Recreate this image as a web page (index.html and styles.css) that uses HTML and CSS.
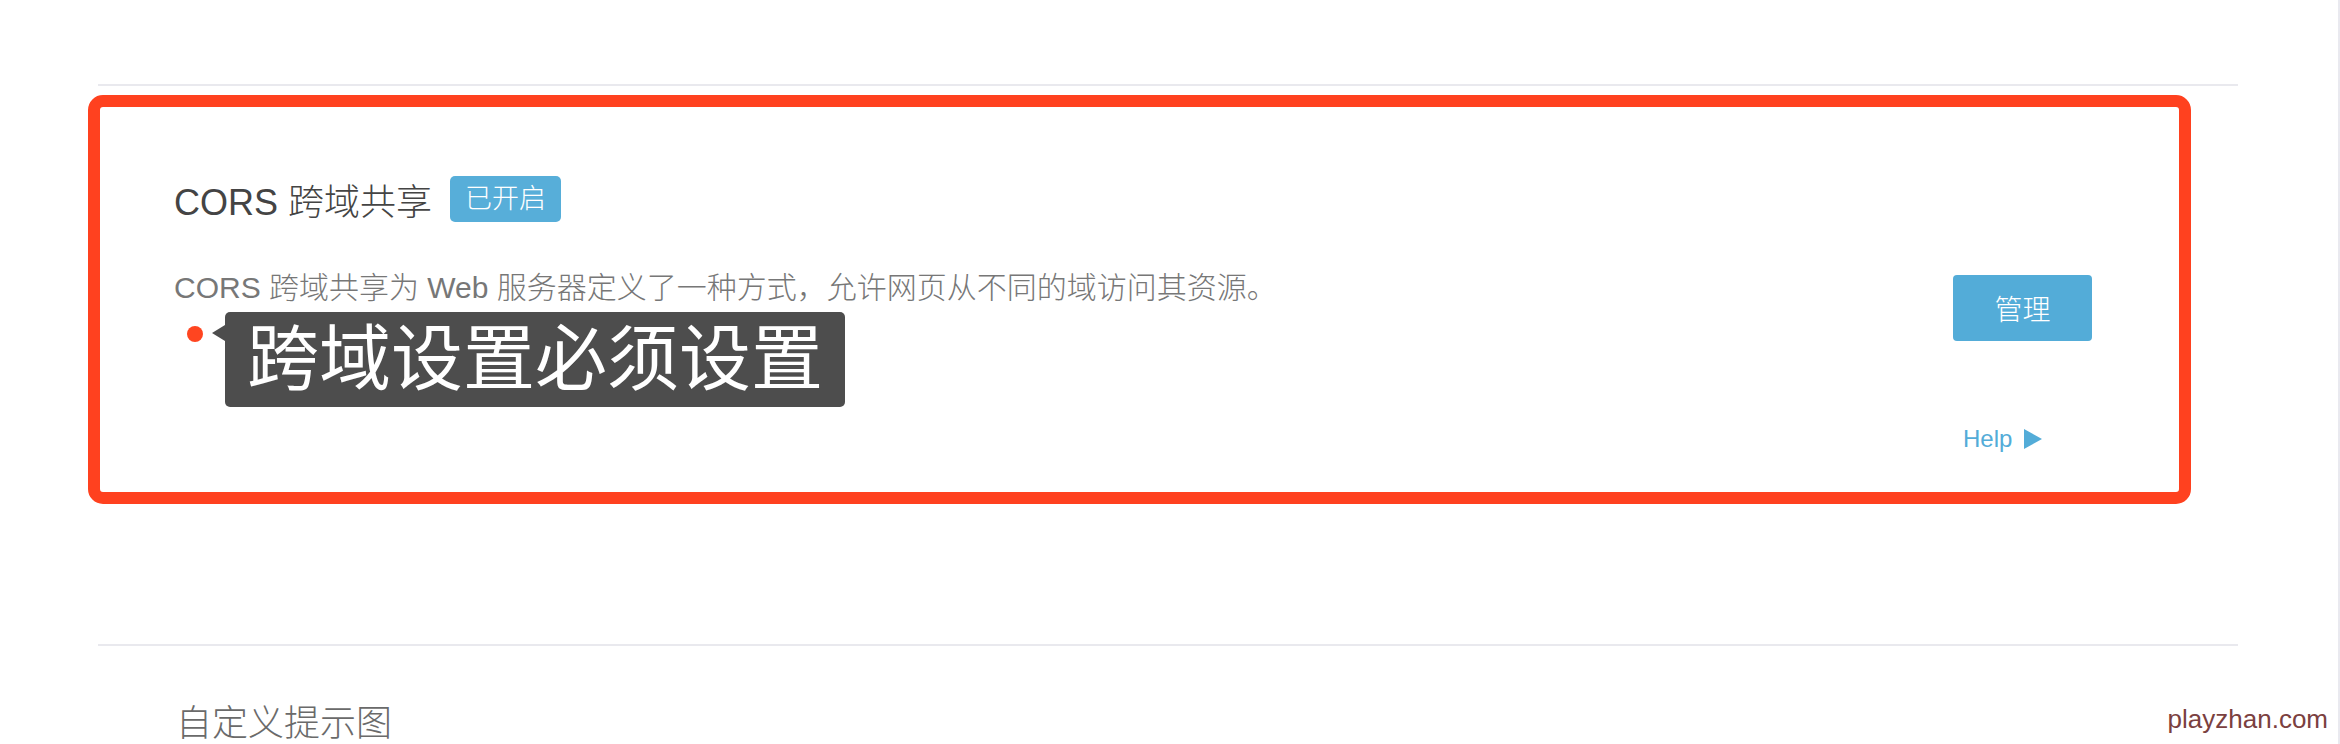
FILE: index.html
```html
<!DOCTYPE html>
<html lang="zh-CN">
<head>
    <meta charset="UTF-8">
    <meta name="viewport" content="width=device-width, initial-scale=1.0">
    <title>跨域设置</title>
    <link rel="stylesheet" href="styles.css">
</head>
<body>
    <div class="page">
        <div class="main">
            <div class="divider"></div>

            <!-- CORS 设置 -->
            <div class="setting-box">
                <div class="setting-info">
                    <div class="setting-title">
                        <span>CORS 跨域共享</span>
                        <span class="badge">已开启</span>
                    </div>
                    <p class="setting-desc">CORS 跨域共享为 Web 服务器定义了一种方式，允许网页从不同的域访问其资源。</p>
                    <div class="tip-row">
                        <span class="tip-dot"></span>
                        <div class="tip">跨域设置必须设置</div>
                    </div>
                </div>
                <div class="setting-actions">
                    <button type="button" class="btn-manage">管理</button>
                    <a class="help-link" href="#">Help
                        <svg width="18" height="20" viewBox="0 0 18 20"><polygon points="0,0 18,10 0,20" fill="#53acd8"/></svg>
                    </a>
                </div>
            </div>

            <div class="divider divider-lower"></div>
            <h3 class="section-title">自定义提示图</h3>
        </div>
        <div class="watermark">playzhan.com</div>
    </div>
</body>
</html>
```

FILE: styles.css
```css
html, body {
    margin: 0;
    padding: 0;
    background-color: #fff;
}

body {
    font-family: "Liberation Sans", "Noto Sans CJK SC", sans-serif;
}

.page {
    position: relative;
    height: 744px;
    overflow: hidden;
    border-right: 2px solid #e9e9ef;
    box-sizing: border-box;
}

.main {
    margin-left: 98px;
    width: 2140px;
}

.divider {
    height: 2px;
    margin-top: 84px;
    background-color: #e9e9ee;
}

.setting-box {
    display: flex;
    box-sizing: border-box;
    width: 2103px;
    height: 409px;
    margin: 9px 0 0 -10px;
    padding: 69px 87px 0 74px;
    border: 12px solid #ff411f;
    border-radius: 15px;
}

.setting-info {
    flex: 1;
}

.setting-title {
    display: flex;
    align-items: center;
    height: 46px;
    font-size: 36px;
    font-weight: 300;
    color: #444;
}

.badge {
    display: inline-block;
    height: 46px;
    line-height: 46px;
    margin-left: 18px;
    padding: 0 15px;
    border-radius: 5px;
    background-color: #57aed9;
    color: #fff;
    font-size: 27px;
}

.setting-desc {
    margin: 46px 0 0;
    font-size: 30px;
    font-weight: 300;
    line-height: 40px;
    color: #777;
}

.tip-row {
    display: flex;
    align-items: flex-start;
    margin-top: 4px;
}

.tip-dot {
    width: 16px;
    height: 16px;
    margin: 14px 0 0 13px;
    border-radius: 50%;
    background-color: #ff4520;
}

.tip {
    position: relative;
    margin-left: 22px;
    padding: 0 22px;
    height: 95px;
    line-height: 95px;
    border-radius: 5px;
    background-color: #4d4d4d;
    color: #fff;
    font-size: 72px;
}

    .tip::before {
        content: "";
        position: absolute;
        left: -13px;
        top: 13px;
        border-top: 8px solid transparent;
        border-bottom: 8px solid transparent;
        border-right: 13px solid #4d4d4d;
    }

.setting-actions {
    display: flex;
    flex-direction: column;
    align-items: flex-start;
    width: 139px;
    margin-top: 99px;
}

.btn-manage {
    width: 139px;
    height: 66px;
    border: none;
    border-radius: 4px;
    background-color: #53acd8;
    color: #fff;
    font-family: inherit;
    font-size: 28px;
    font-weight: 300;
    cursor: pointer;
}

.help-link {
    display: flex;
    align-items: center;
    gap: 12px;
    margin: 83px 0 0 10px;
    font-size: 24px;
    line-height: 30px;
    color: #53acd8;
    text-decoration: none;
    white-space: nowrap;
}

.divider-lower {
    margin-top: 140px;
}

.section-title {
    margin: 54px 0 0;
    padding-left: 78px;
    font-size: 36px;
    font-weight: 300;
    line-height: 48px;
    color: #6a6a6a;
}

.watermark {
    position: absolute;
    top: 704px;
    right: 10px;
    font-size: 26px;
    line-height: 30px;
    color: #7b4040;
}
```
